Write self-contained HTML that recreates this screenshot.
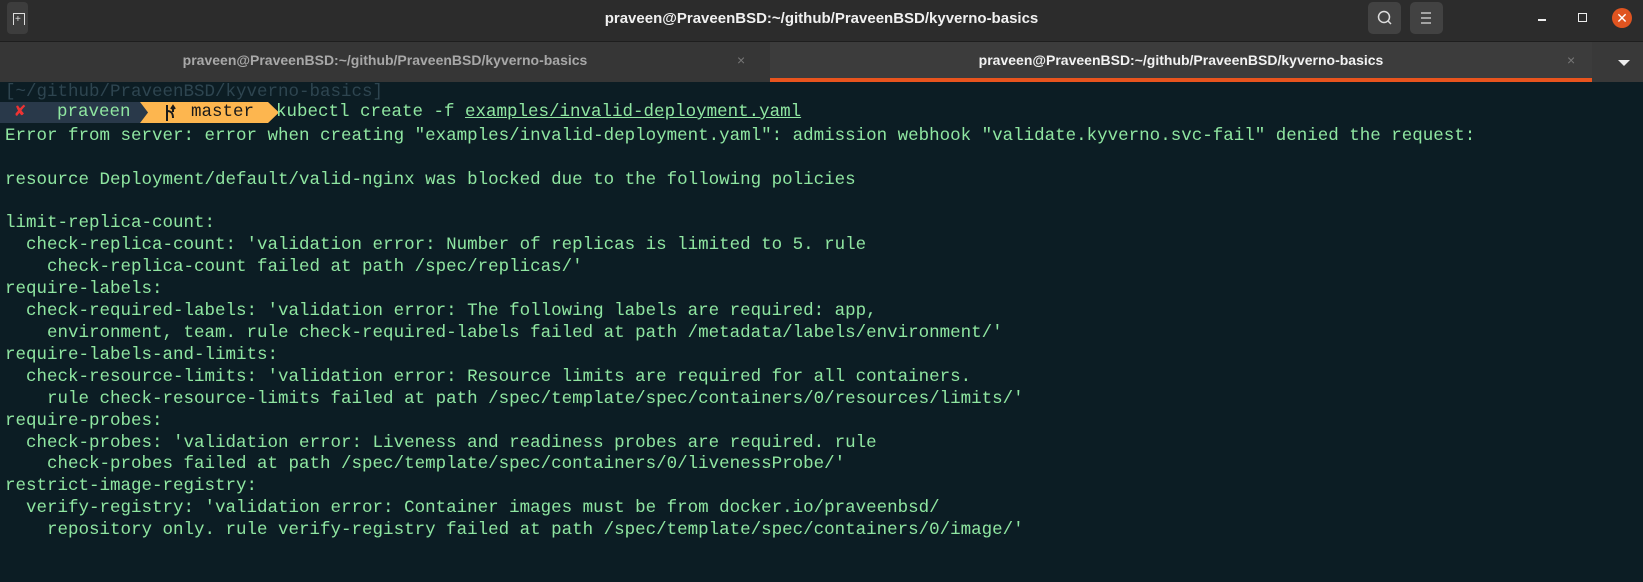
<!DOCTYPE html>
<html><head><meta charset="utf-8"><style>
html,body{margin:0;padding:0;width:1643px;height:582px;overflow:hidden;background:#0c1d24;}
.tb{position:absolute;left:0;top:0;width:1643px;height:41px;background:#2c2c2c;border-bottom:1px solid #1e1e1e;}
.tb .t{position:absolute;left:0;right:0;top:0;text-align:center;color:#f0f0f0;font:bold 15px "Liberation Sans",sans-serif;line-height:38px;}
.btn{position:absolute;top:2px;width:33px;height:32px;background:#424242;border-radius:5px;}
.tabs{position:absolute;left:0;top:42px;width:1643px;height:40px;background:#393939;}
.tab{position:absolute;top:0;height:40px;text-align:center;font:bold 14px "Liberation Sans",sans-serif;line-height:36px;}
.term{position:absolute;left:5px;top:82px;font:17.5px/21.9px "Liberation Mono",monospace;color:#8fe6a1;white-space:pre;}
.p{position:absolute;top:102px;font:17.5px/21px "Liberation Mono",monospace;color:#8fe6a1;white-space:pre;}
.dim{color:#2e4550}
</style></head><body>
<div class="tb">
 <div style="position:absolute;left:7px;top:2px;width:21px;height:32px;background:#3d3d3d;border-radius:4px;"></div>
 <div style="position:absolute;left:13px;top:13px;width:10px;height:11px;border:1px solid #ddd;border-bottom:none;"></div>
 <div style="position:absolute;left:15px;top:14px;color:#ddd;font:10px 'Liberation Sans';">+</div>
 <div class="t">praveen@PraveenBSD:~/github/PraveenBSD/kyverno-basics</div>
 <div class="btn" style="left:1368px"><svg width="33" height="32"><circle cx="16" cy="15" r="5.5" fill="none" stroke="#ddd" stroke-width="1.5"/><line x1="20" y1="19" x2="23" y2="22" stroke="#ddd" stroke-width="1.5"/></svg></div>
 <div class="btn" style="left:1410px"><svg width="33" height="32"><path d="M11 11h10M11 16h10M11 21h10" stroke="#ddd" stroke-width="1.3"/></svg></div>
 <div style="position:absolute;left:1538px;top:19px;width:8px;height:1.5px;background:#eee"></div>
 <div style="position:absolute;left:1578px;top:13px;width:7px;height:7px;border:1.3px solid #eee"></div>
 <div style="position:absolute;left:1612px;top:8px;width:20px;height:20px;border-radius:50%;background:#e05420;color:#fff;font:14px/20px 'Liberation Sans';text-align:center;">✕</div>
</div>
<div class="tabs">
 <div class="tab" style="left:0;width:770px;color:#a8a8a8;background:#363636;">praveen@PraveenBSD:~/github/PraveenBSD/kyverno-basics<span style="position:absolute;left:737px;color:#777;font-weight:normal">×</span></div>
 <div class="tab" style="left:770px;width:822px;color:#f2f2f2;background:#3c3c3c;border-bottom:4px solid #e8541e;box-sizing:border-box;">praveen@PraveenBSD:~/github/PraveenBSD/kyverno-basics<span style="position:absolute;left:797px;color:#777;font-weight:normal">×</span></div>
 <svg style="position:absolute;left:1617px;top:16px" width="14" height="10"><path d="M1 2h12l-6 6z" fill="#eee"/></svg>
</div>
<svg style="position:absolute;left:0;top:102px" width="290" height="21"><path d="M0 0h140l8 10.5-8 10.5H0z" fill="#29394a"/><path d="M140 0h128l11 10.5-11 10.5H140l8-10.5z" fill="#fdb64f"/></svg>
<span class="p" style="left:15px;color:#ee3333;font-weight:bold">✘</span>
<span class="p" style="left:57px">praveen</span>
<span class="p" style="left:191px;color:#1a1a1a">master</span>
<span class="p" style="left:276px">kubectl create -f <u>examples/invalid-deployment.yaml</u></span>
<svg style="position:absolute;left:164px;top:104px" width="12" height="18"><path d="M3 1v16M3 7c5 0 6 3 6 7M9 2v6M7 5l2-3 2 3" stroke="#1a1a1a" stroke-width="2" fill="none"/></svg>
<div class="term"><span class="dim">[~/github/PraveenBSD/kyverno-basics]</span>

Error from server: error when creating "examples/invalid-deployment.yaml": admission webhook "validate.kyverno.svc-fail" denied the request:

resource Deployment/default/valid-nginx was blocked due to the following policies

limit-replica-count:
  check-replica-count: 'validation error: Number of replicas is limited to 5. rule
    check-replica-count failed at path /spec/replicas/'
require-labels:
  check-required-labels: 'validation error: The following labels are required: app,
    environment, team. rule check-required-labels failed at path /metadata/labels/environment/'
require-labels-and-limits:
  check-resource-limits: 'validation error: Resource limits are required for all containers.
    rule check-resource-limits failed at path /spec/template/spec/containers/0/resources/limits/'
require-probes:
  check-probes: 'validation error: Liveness and readiness probes are required. rule
    check-probes failed at path /spec/template/spec/containers/0/livenessProbe/'
restrict-image-registry:
  verify-registry: 'validation error: Container images must be from docker.io/praveenbsd/
    repository only. rule verify-registry failed at path /spec/template/spec/containers/0/image/'</div>
</body></html>
